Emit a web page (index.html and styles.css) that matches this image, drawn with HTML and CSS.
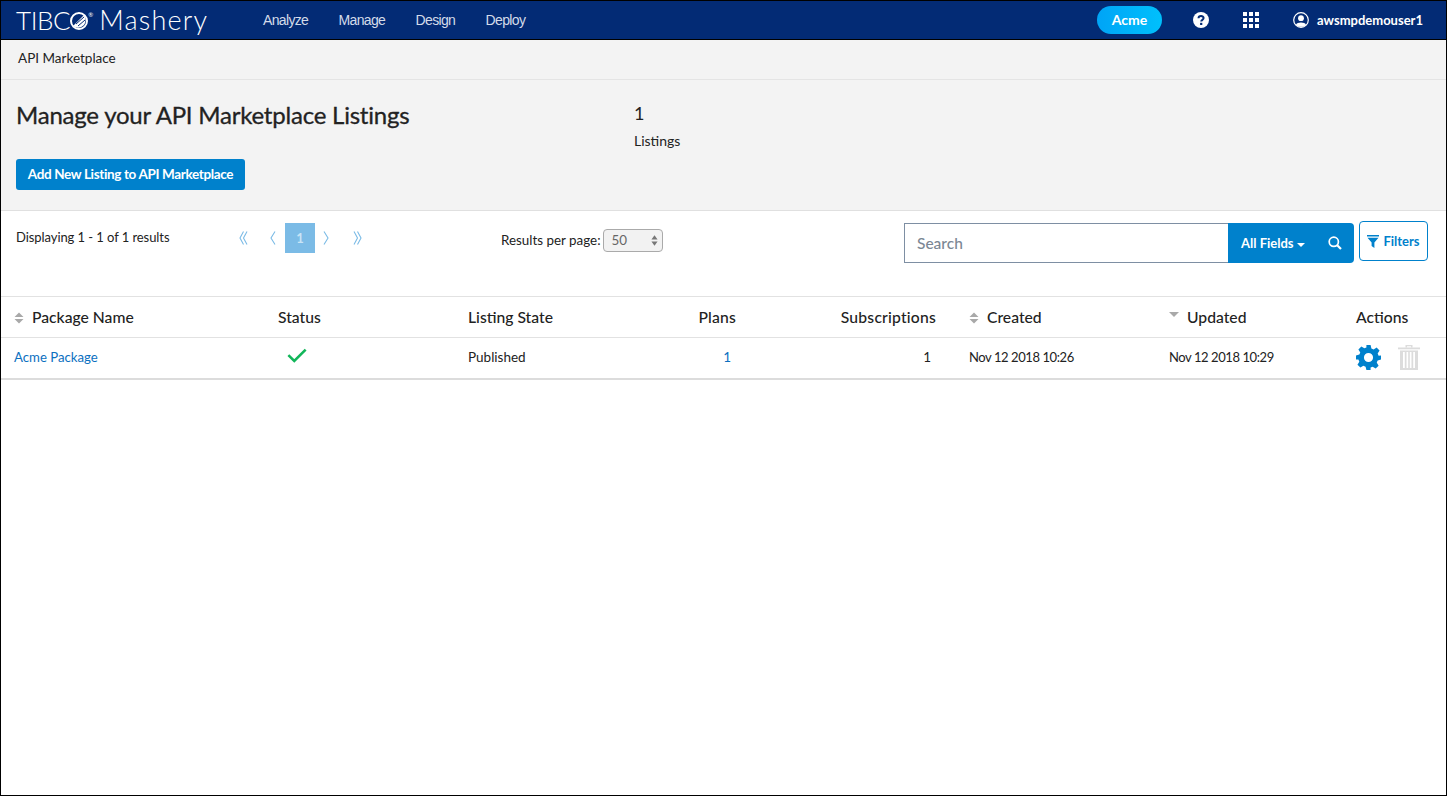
FILE: index.html
```html
<!DOCTYPE html>
<html lang="en">
<head>
  <meta charset="utf-8">
  <title>API Marketplace</title>
  <link rel="stylesheet" href="styles.css">
</head>
<body>
<div class="page">
  <nav class="topnav">
    <div class="logo">
      <span class="logo-tibco">TIBC</span><svg class="logo-ball" viewBox="0 0 18 18" width="18" height="18"><circle cx="9" cy="9" r="8" fill="none" stroke="#fff" stroke-width="2"/><path d="M3 14 L14 3 Q17 8 14 13 Q10 17 5 15 Z" fill="#fff"/><path d="M6 12 L14 5 M8 14 L15 8" stroke="#032b75" stroke-width="1"/></svg><sup class="logo-reg">®</sup>
      <span class="logo-product">Mashery</span>
    </div>
    <ul class="nav-links">
      <li>Analyze</li>
      <li>Manage</li>
      <li>Design</li>
      <li>Deploy</li>
    </ul>
    <div class="nav-right">
      <span class="org-pill">Acme</span>
      <svg class="nav-help" viewBox="0 0 16 16" width="16" height="16"><circle cx="8" cy="8" r="8" fill="#fff"/><path d="M5.5 6.2 C5.6 3.4 10.6 3.4 10.6 6.1 C10.6 7.9 8.2 7.8 8.2 9.6" fill="none" stroke="#032b75" stroke-width="2"/><rect x="7.1" y="10.8" width="2.2" height="2.2" fill="#032b75"/></svg>
      <svg class="nav-apps" viewBox="0 0 16 16" width="16" height="16" fill="#fff"><rect width="4" height="4"/><rect x="6" width="4" height="4"/><rect x="12" width="4" height="4"/><rect y="6" width="4" height="4"/><rect x="6" y="6" width="4" height="4"/><rect x="12" y="6" width="4" height="4"/><rect y="12" width="4" height="4"/><rect x="6" y="12" width="4" height="4"/><rect x="12" y="12" width="4" height="4"/></svg>
      <span class="nav-user">
        <svg viewBox="0 0 16 16" width="16" height="16"><circle cx="8" cy="8" r="7.3" fill="none" stroke="#fff" stroke-width="1.2"/><circle cx="8" cy="6.2" r="2.9" fill="#fff"/><path d="M2.9 13 C4 9.8 12 9.8 13.1 13 C10.5 15.4 5.5 15.4 2.9 13 Z" fill="#fff"/></svg>
        awsmpdemouser1
      </span>
    </div>
  </nav>

  <div class="crumbs">API Marketplace</div>

  <header class="summary">
    <div class="summary-main">
      <h1>Manage your API Marketplace Listings</h1>
      <button class="btn-add">Add New Listing to API Marketplace</button>
    </div>
    <div class="summary-stat">
      <div class="stat-num">1</div>
      <div class="stat-label">Listings</div>
    </div>
  </header>

  <section class="toolbar">
    <div class="result-count">Displaying 1 - 1 of 1 results</div>
    <div class="pager">
      <svg class="pg-first" viewBox="0 0 9 14" width="9" height="14"><path d="M4.5 .5 L1 7 L4.5 13.5 M8 .5 L4.5 7 L8 13.5" /></svg>
      <svg class="pg-prev" viewBox="0 0 6 14" width="6" height="14"><path d="M5 .5 L1 7 L5 13.5" /></svg>
      <span class="pg-current">1</span>
      <svg class="pg-next" viewBox="0 0 6 14" width="6" height="14"><path d="M1 .5 L5 7 L1 13.5" /></svg>
      <svg class="pg-last" viewBox="0 0 9 14" width="9" height="14"><path d="M1 .5 L4.5 7 L1 13.5 M4.5 .5 L8 7 L4.5 13.5" /></svg>
    </div>
    <div class="per-page">
      <span>Results per page:</span>
      <span class="select-box">50
        <svg viewBox="0 0 8 12" width="7" height="11" fill="#777"><path d="M4 0 L7.5 4.8 H.5 Z M4 12 L.5 7.2 H7.5 Z"/></svg>
      </span>
    </div>
    <div class="search-group">
      <div class="search-input">Search</div>
      <div class="search-btn">
        <span class="field-pick">All Fields<i class="caret"></i></span>
        <svg viewBox="0 0 14 14" width="14" height="14" fill="none" stroke="#fff" stroke-width="1.7"><circle cx="5.8" cy="5.8" r="4.6"/><path d="M9.2 9.2 L13 13" stroke-width="2.2"/></svg>
      </div>
    </div>
    <button class="btn-filters">
      <svg viewBox="0 0 12 13" width="12" height="13" fill="#0081cc"><rect width="12" height="1.5"/><path d="M.5 2.8 H11.5 L7.4 7.5 V13 L4.6 11 V7.5 Z"/></svg>
      Filters
    </button>
  </section>

  <table class="listings">
    <colgroup>
      <col class="c-name"><col class="c-status"><col class="c-state"><col class="c-plans"><col class="c-subs"><col class="c-created"><col class="c-updated"><col class="c-actions">
    </colgroup>
    <thead>
      <tr>
        <th class="first"><svg class="sort" viewBox="0 0 10 12" width="10" height="12"><path d="M5 .5 L9.5 5 H.5 Z M5 11.5 L.5 7 H9.5 Z"/></svg>Package Name</th>
        <th>Status</th>
        <th>Listing State</th>
        <th class="num">Plans</th>
        <th class="num">Subscriptions</th>
        <th class="date"><svg class="sort" viewBox="0 0 10 12" width="10" height="12"><path d="M5 .5 L9.5 5 H.5 Z M5 11.5 L.5 7 H9.5 Z"/></svg>Created</th>
        <th><svg class="sort sort-wide" viewBox="0 0 10 12" width="10" height="12"><path d="M0 2 H10 L5 7 Z"/></svg>Updated</th>
        <th>Actions</th>
      </tr>
    </thead>
    <tbody>
      <tr>
        <td class="first"><a href="#">Acme Package</a></td>
        <td><svg class="check" viewBox="0 0 22 16" width="20" height="15" fill="none" stroke="#12b65a" stroke-width="2.8"><path d="M1.5 7.5 L8 14 L20.5 1.5"/></svg></td>
        <td>Published</td>
        <td class="num val"><a href="#">1</a></td>
        <td class="num val">1</td>
        <td class="date stamp">Nov 12 2018 10:26</td>
        <td class="stamp">Nov 12 2018 10:29</td>
        <td class="actions">
          <svg class="gear" viewBox="0 0 24 24" width="25" height="25"><path fill="#0081cc" fill-rule="evenodd" d="M10 0 H14 L14.8 3.3 L16.9 4.2 L19.8 2.4 L22.6 5.2 L20.8 8.1 L21.7 10.2 L24 10.1 V14 L20.8 14.8 L19.9 16.9 L21.7 19.8 L18.9 22.6 L16 20.8 L14 21.7 L14 24 H10 L9.2 20.8 L7.1 19.9 L4.2 21.7 L1.4 18.9 L3.2 16 L2.3 14 L0 14 V10 L3.2 9.2 L4.1 7.1 L2.3 4.2 L5.1 1.4 L8 3.2 L10 2.3 Z M12 7.6 A4.4 4.4 0 1 0 12 16.4 A4.4 4.4 0 1 0 12 7.6 Z"/></svg>
          <svg class="trash" viewBox="0 0 22 26" width="22" height="26" fill="#dcdcdc"><rect y="3.5" width="22" height="1.8"/><path d="M7.5 3.5 V1 H14.5 V3.5 H13 V2.2 H9 V3.5 Z"/><path fill-rule="evenodd" d="M2 6.5 H20 V26 H2 Z M5 8 V24 H6.8 V8 Z M8.5 8 V24 H10.2 V8 Z M11.8 8 V24 H13.5 V8 Z M15.2 8 V24 H17 V8 Z"/></svg>
        </td>
      </tr>
    </tbody>
  </table>
</div>
</body>
</html>
```

FILE: styles.css
```css
* { box-sizing: border-box; }
html, body { margin: 0; height: 100%; }
body {
  font-family: "Lato", "Noto Sans", sans-serif;
  font-size: 13px;
  color: #222;
  background: #fff;
}
.page {
  height: 796px;
  border: 1px solid #000;
  overflow: hidden;
}

/* top bar */
.topnav {
  display: flex;
  align-items: center;
  height: 39px;
  background: #032b75;
  border-bottom: 1px solid #000;
  color: #fff;
  padding: 0 23px 0 15px;
}
.logo {
  display: flex;
  align-items: center;
  width: 247px;
  color: #fff;
}
.logo-tibco, .logo-product {
  font-family: "Lato", sans-serif;
  font-weight: 300;
  line-height: 30px;
}
.logo-tibco { font-size: 26px; letter-spacing: -.4px; }
.logo-ball { margin-top: 1px; }
.logo-reg {
  font-size: 6px;
  align-self: flex-start;
  margin: 7px 0 0 0;
  line-height: 6px;
}
.logo-product { margin-left: 6px; font-size: 27px; letter-spacing: 1.2px; }
.nav-links {
  display: flex;
  gap: 30.3px;
  list-style: none;
  margin: 0;
  padding: 0;
  font-family: "Liberation Sans", sans-serif;
  font-size: 14px;
  letter-spacing: -.65px;
  color: #d3dbe9;
}
.nav-right {
  display: flex;
  align-items: center;
  margin-left: auto;
}
.org-pill {
  width: 65px;
  height: 28px;
  line-height: 28px;
  text-align: center;
  border-radius: 14px;
  background: linear-gradient(90deg, #00a4f6, #00c0fc);
  font-weight: 700;
  font-size: 14px;
}
.nav-help { margin-left: 31px; }
.nav-apps { margin-left: 34px; }
.nav-user {
  display: flex;
  align-items: center;
  gap: 8px;
  margin-left: 34px;
  font-weight: 700;
  font-size: 13px;
}

/* breadcrumb + summary */
.crumbs {
  height: 40px;
  line-height: 37px;
  padding-left: 17px;
  background: #f3f3f3;
  border-bottom: 1px solid #e4e4e4;
  font-size: 13.5px;
}
.summary {
  display: flex;
  height: 131px;
  padding: 20px 0 0 15px;
  background: #f3f3f3;
  border-bottom: 1px solid #e0e0e0;
}
.summary-main { width: 618px; }
.summary h1 {
  margin: 0 0 29px;
  font-size: 24px;
  line-height: 30px;
  font-weight: 400;
  letter-spacing: -.22px;
  -webkit-text-stroke: .3px #222;
  color: #222;
}
.btn-add {
  display: block;
  height: 31px;
  width: 229px;
  padding: 0 0 2px;
  border: 0;
  border-radius: 3px;
  background: #0081cc;
  color: #fff;
  font-family: inherit;
  font-size: 13.5px;
  font-weight: 700;
  letter-spacing: -.35px;
}
.stat-num { font-size: 18px; line-height: 27px; }
.stat-label { font-size: 14px; line-height: 27px; }

/* results toolbar */
.toolbar {
  display: flex;
  align-items: flex-start;
  height: 85px;
  padding: 12px 18px 0 15px;
}
.result-count { width: 220px; line-height: 28px; letter-spacing: -.07px; }
.pager {
  display: flex;
  align-items: center;
  height: 30px;
}
.pager svg {
  fill: none;
  stroke: #7bbbe6;
  stroke-width: 1.1;
}
.pg-first { margin-left: 3px; }
.pg-prev { margin-left: 22px; }
.pg-current {
  width: 30px;
  height: 30px;
  line-height: 30px;
  margin-left: 9px;
  text-align: center;
  background: #7bbbe6;
  color: #c9e4f6;
  font-weight: 700;
}
.pg-next { margin-left: 8px; }
.pg-last { margin-left: 24px; }
.per-page {
  display: flex;
  align-items: center;
  gap: 2px;
  margin-left: 139px;
  height: 34px;
  font-size: 13.4px;
}
.select-box {
  display: flex;
  align-items: center;
  justify-content: space-between;
  width: 60px;
  height: 23px;
  padding: 0 4px 0 8px;
  background: #f2f2f2;
  border: 1px solid #aaa;
  border-radius: 4px;
  color: #666;
}
.search-group {
  display: flex;
  height: 40px;
  width: 450px;
  margin-left: auto;
}
.search-input {
  flex: 1;
  line-height: 38px;
  padding-left: 12px;
  border: 1px solid #7e8fa3;
  border-right: 0;
  color: #7b8794;
  font-size: 15.5px;
  font-weight: 500;
}
.search-btn {
  display: flex;
  align-items: center;
  justify-content: space-between;
  width: 126px;
  padding: 0 12px 0 13px;
  background: #0081cc;
  border-radius: 0 4px 4px 0;
  color: #fff;
  font-weight: 700;
}
.caret {
  display: inline-block;
  margin-left: 3px;
  vertical-align: middle;
  border-top: 4px solid #fff;
  border-left: 4px solid transparent;
  border-right: 4px solid transparent;
}
.btn-filters {
  display: flex;
  align-items: center;
  justify-content: center;
  gap: 4px;
  width: 69px;
  height: 40px;
  margin: -2px 0 0 5px;
  padding: 0;
  background: #fff;
  border: 1px solid #0081cc;
  border-radius: 4px;
  color: #0081cc;
  font-family: inherit;
  font-size: 13px;
  font-weight: 700;
}

/* listings table */
.listings {
  width: 1445px;
  table-layout: fixed;
  border-collapse: collapse;
  border-top: 1px solid #e2e2e2;
  border-bottom: 2px solid #dcdcdc;
}
.c-name { width: 277px; }
.c-status { width: 190px; }
.c-state { width: 172px; }
.c-plans { width: 96px; }
.c-subs { width: 200px; }
.c-created { width: 233px; }
.c-updated { width: 187px; }
.c-actions { width: 90px; }
.listings th, .listings td { padding: 0; text-align: left; }
.listings th {
  height: 41px;
  font-size: 15.7px;
  font-weight: 500;
  border-bottom: 1px solid #e2e2e2;
}
.listings th.num { letter-spacing: .2px; }
.listings td { height: 40px; padding-bottom: 2px; font-size: 13.5px; }
.listings td.stamp { font-size: 13px; letter-spacing: -.42px; }
.first { padding-left: 13px !important; }
.date { padding-left: 33px !important; }
.num { text-align: right !important; }
.val { padding-right: 5px !important; }
.sort {
  fill: #a9a9a9;
  margin-right: 8px;
  vertical-align: -1px;
}
.sort-wide { margin-right: 8px; vertical-align: 1px; }
a { color: #0c70bf; text-decoration: none; }
.first a { font-size: 13.2px; }
.check { margin: 0 0 3px 9px; display: block; }
.actions {
  display: flex;
  align-items: center;
  gap: 17px;
}
```
